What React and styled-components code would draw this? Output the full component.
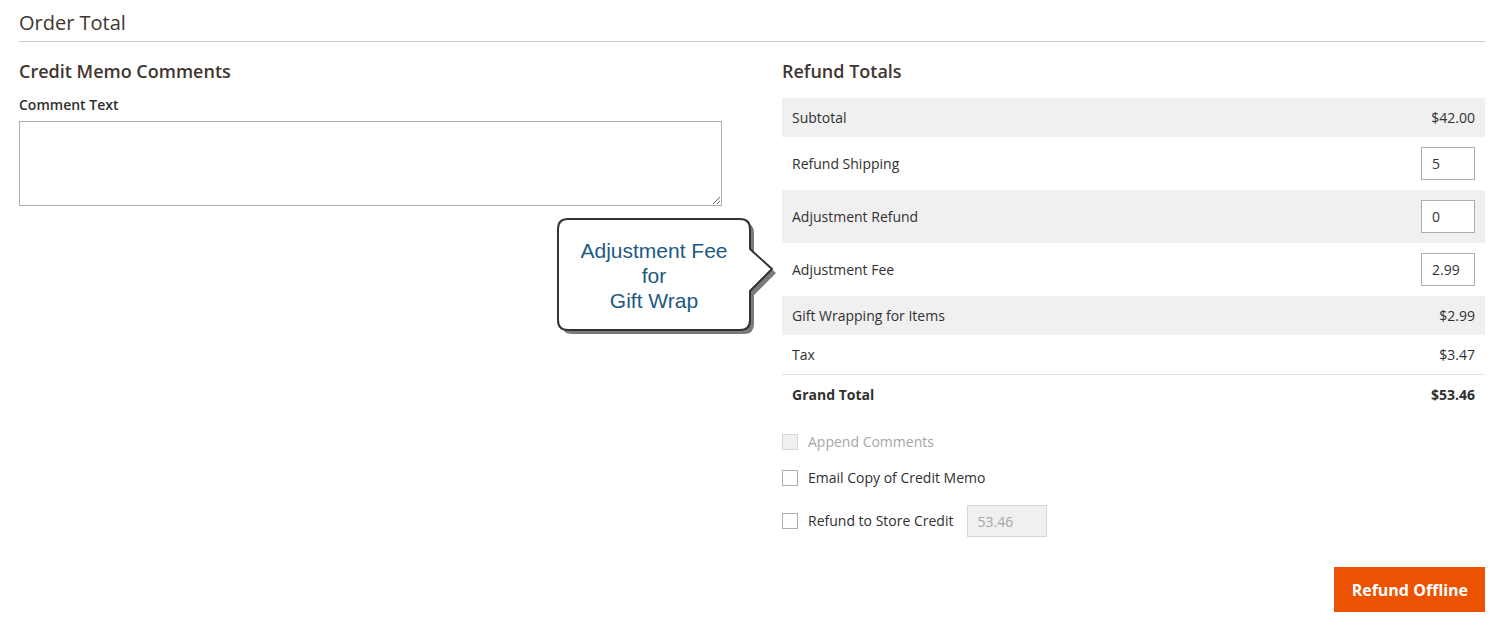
import React from 'react'
import styled, { createGlobalStyle } from 'styled-components'

const GlobalStyle = createGlobalStyle`
    body {
        margin: 0;
        background: #ffffff;
        font-family: "Open Sans", "Liberation Sans", sans-serif;
        color: #303030;
    }
`;

const Page = styled.div`
    position: relative;
    padding: 0 19px 20px;
`;
const SectionTitle = styled.h2`
    margin: 0;
    padding: 11px 0 6px;
    font-size: 20px;
    line-height: 24px;
    font-weight: 400;
    color: #41362f;
    border-bottom: 1px solid #cccccc;
`;
const Columns = styled.div`
    display: grid;
    grid-template-columns: 1fr 1fr;
    column-gap: 60px;
    padding-top: 18px;
`;
const Column = styled.div`
    display: flex;
    flex-direction: column;
`;
const Heading = styled.h3`
    margin: 0;
    font-size: 18px;
    line-height: 22px;
    font-weight: 600;
    color: #41362f;
`;
const FieldLabel = styled.label`
    margin-top: 13px;
    font-size: 14px;
    line-height: 20px;
    font-weight: 600;
    color: #303030;
`;
const TextArea = styled.textarea`
    box-sizing: border-box;
    margin-top: 6px;
    width: 100%;
    height: 85px;
    border: 1px solid #adadad;
    border-radius: 0;
    font-family: inherit;
    font-size: 14px;
    padding: 8px 10px;
    outline: none;
`;
const Table = styled.div`
    margin-top: 16px;
    display: flex;
    flex-direction: column;
`;
const Row = styled.div`
    display: flex;
    align-items: center;
    justify-content: space-between;
    padding: 0 10px;
    height: ${p => (p.$tall ? '53px' : '39px')};
    background: ${p => (p.$shaded ? '#f0f0f0' : 'transparent')};
    border-top: ${p => (p.$divider ? '1px solid #e3e3e3' : 'none')};
    font-size: 14px;
    font-weight: ${p => (p.$bold ? 700 : 400)};
    color: #303030;
`;
const AmountInput = styled.input`
    box-sizing: border-box;
    width: 54px;
    height: 33px;
    border: 1px solid #adadad;
    padding: 0 10px;
    font-family: inherit;
    font-size: 14px;
    color: #303030;
    outline: none;
`;
const Options = styled.div`
    margin-top: 18px;
    display: flex;
    flex-direction: column;
    gap: 16px;
`;
const Option = styled.label`
    display: flex;
    align-items: center;
    gap: 10px;
    margin-top: ${p => (p.$spaced ? '1px' : '0')};
    font-size: 14px;
    line-height: 20px;
    color: ${p => (p.$disabled ? '#a6a6a6' : '#303030')};
`;
const Check = styled.input.attrs({ type: 'checkbox' })`
    appearance: none;
    margin: 0;
    width: 16px;
    height: 16px;
    box-sizing: border-box;
    border: 1px solid ${p => (p.disabled ? '#d6d6d6' : '#adadad')};
    background: ${p => (p.disabled ? '#f0f0f0' : '#ffffff')};
`;
const CreditInput = styled.input`
    box-sizing: border-box;
    margin-left: 4px;
    width: 80px;
    height: 32px;
    border: 1px solid #d6d6d6;
    background: #f0f0f0;
    padding: 0 9px;
    font-family: inherit;
    font-size: 14px;
    color: #a6a6a6;
`;
const Actions = styled.div`
    display: flex;
    justify-content: flex-end;
    margin-top: 30px;
`;
const PrimaryButton = styled.button`
    height: 45px;
    padding: 0 17px 0 18px;
    border: none;
    background: #eb5202;
    color: #ffffff;
    font-family: inherit;
    font-size: 16px;
    font-weight: 700;
    cursor: pointer;
`;

/* callout bubble lies over the page */
const Callout = styled.div`
    position: absolute;
    left: 557px;
    top: 218px;
    width: 222px;
    height: 120px;
`;
const CalloutText = styled.div`
    position: absolute;
    left: 1px;
    top: 2px;
    width: 192px;
    height: 111px;
    display: flex;
    align-items: center;
    justify-content: center;
    text-align: center;
    font-family: "Liberation Sans", Arial, sans-serif;
    font-size: 21px;
    line-height: 25px;
    color: #1c5a82;
`;

const bubble = 'M11 1 H183 Q193 1 193 11 V31 L215 51 L193 73 V102 Q193 112 183 112 H11 Q1 112 1 102 V11 Q1 1 11 1 Z'

const totals = [
    { label: 'Subtotal', value: '$42.00', shaded: true },
    { label: 'Refund Shipping', input: '5', tall: true },
    { label: 'Adjustment Refund', input: '0', tall: true, shaded: true },
    { label: 'Adjustment Fee', input: '2.99', tall: true },
    { label: 'Gift Wrapping for Items', value: '$2.99', shaded: true },
    { label: 'Tax', value: '$3.47' },
]

const App = () => {
    return (
        <Page>
            <GlobalStyle />
            <SectionTitle>Order Total</SectionTitle>
            <Columns>
                <Column>
                    <Heading>Credit Memo Comments</Heading>
                    <FieldLabel>Comment Text</FieldLabel>
                    <TextArea />
                </Column>
                <Column>
                    <Heading>Refund Totals</Heading>
                    <Table>
                        {totals.map(t => (
                            <Row key={t.label} $shaded={t.shaded} $tall={t.tall}>
                                <span>{t.label}</span>
                                {t.input !== undefined
                                    ? <AmountInput defaultValue={t.input} />
                                    : <span>{t.value}</span>}
                            </Row>
                        ))}
                        <Row $divider $bold>
                            <span>Grand Total</span>
                            <span>$53.46</span>
                        </Row>
                    </Table>
                    <Options>
                        <Option $disabled>
                            <Check disabled />
                            Append Comments
                        </Option>
                        <Option>
                            <Check />
                            Email Copy of Credit Memo
                        </Option>
                        <Option $spaced>
                            <Check />
                            Refund to Store Credit
                            <CreditInput defaultValue="53.46" disabled />
                        </Option>
                    </Options>
                    <Actions>
                        <PrimaryButton>Refund Offline</PrimaryButton>
                    </Actions>
                </Column>
            </Columns>
            <Callout>
                <svg width="222" height="120" viewBox="0 0 222 120">
                    <path d={bubble} transform="translate(4 4)" fill="#7a7a7a" />
                    <path d={bubble} fill="#ffffff" stroke="#333333" strokeWidth="2" strokeLinejoin="round" />
                </svg>
                <CalloutText>
                    Adjustment Fee<br />for<br />Gift Wrap
                </CalloutText>
            </Callout>
        </Page>
    )
}
export default App
